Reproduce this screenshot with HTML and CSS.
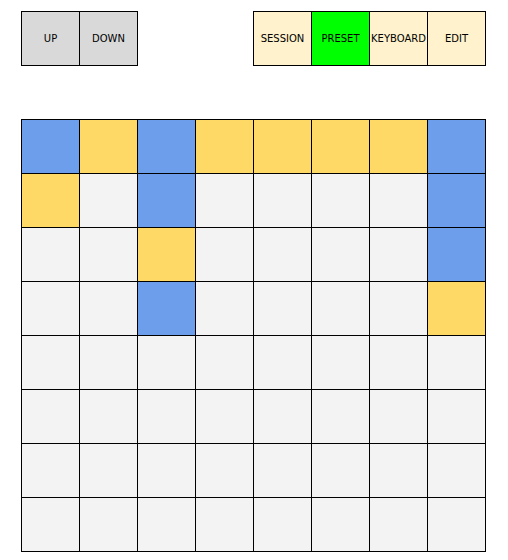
FILE: index.html
```html
<!DOCTYPE html>
<html>
<head>
<meta charset="utf-8">
<link rel="stylesheet" href="styles.css">
</head>
<body>
<div class="page">
  <div class="toolbar">
    <div class="group">
      <div class="btn nav">UP</div>
      <div class="btn nav">DOWN</div>
    </div>
    <div class="group">
      <div class="btn mode">SESSION</div>
      <div class="btn mode active">PRESET</div>
      <div class="btn mode">KEYBOARD</div>
      <div class="btn mode">EDIT</div>
    </div>
  </div>
  <div class="grid">
    <div class="cell b"></div><div class="cell y"></div><div class="cell b"></div><div class="cell y"></div><div class="cell y"></div><div class="cell y"></div><div class="cell y"></div><div class="cell b"></div>
    <div class="cell y"></div><div class="cell"></div><div class="cell b"></div><div class="cell"></div><div class="cell"></div><div class="cell"></div><div class="cell"></div><div class="cell b"></div>
    <div class="cell"></div><div class="cell"></div><div class="cell y"></div><div class="cell"></div><div class="cell"></div><div class="cell"></div><div class="cell"></div><div class="cell b"></div>
    <div class="cell"></div><div class="cell"></div><div class="cell b"></div><div class="cell"></div><div class="cell"></div><div class="cell"></div><div class="cell"></div><div class="cell y"></div>
    <div class="cell"></div><div class="cell"></div><div class="cell"></div><div class="cell"></div><div class="cell"></div><div class="cell"></div><div class="cell"></div><div class="cell"></div>
    <div class="cell"></div><div class="cell"></div><div class="cell"></div><div class="cell"></div><div class="cell"></div><div class="cell"></div><div class="cell"></div><div class="cell"></div>
    <div class="cell"></div><div class="cell"></div><div class="cell"></div><div class="cell"></div><div class="cell"></div><div class="cell"></div><div class="cell"></div><div class="cell"></div>
    <div class="cell"></div><div class="cell"></div><div class="cell"></div><div class="cell"></div><div class="cell"></div><div class="cell"></div><div class="cell"></div><div class="cell"></div>
  </div>
</div>
</body>
</html>
```
FILE: styles.css
```css
html, body {
  margin: 0;
  padding: 0;
  background: #ffffff;
}
.page {
  padding: 11px 21px;
  width: 465px;
  font-family: "DejaVu Sans", Verdana, sans-serif;
  font-size: 10px;
  color: #000;
}
.toolbar {
  display: flex;
  justify-content: space-between;
  margin-bottom: 53px;
}
.group {
  display: flex;
  gap: 1px;
  padding: 1px;
  background: #000;
}
.btn {
  width: 57px;
  height: 53px;
  display: flex;
  align-items: center;
  justify-content: center;
  white-space: nowrap;
}
.nav { background: #d9d9d9; }
.mode { background: #fff2cc; }
.mode.active { background: #00ff00; }
.grid {
  display: grid;
  grid-template-columns: repeat(8, 57px);
  grid-auto-rows: 53px;
  gap: 1px;
  padding: 1px;
  background: #000;
  width: max-content;
}
.cell { background: #f3f3f3; }
.cell.b { background: #6d9eeb; }
.cell.y { background: #ffd966; }
```
